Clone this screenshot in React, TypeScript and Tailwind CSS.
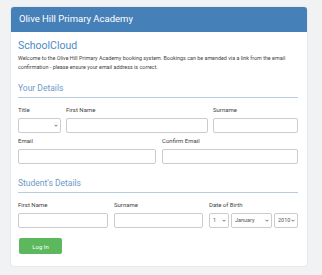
import React from "react";

const font = { fontFamily: "Roboto, 'Liberation Sans', sans-serif" };

function Label({ children }: { children: React.ReactNode }) {
  return <div className="text-[6px] leading-[8px] text-[#444] mb-[4px]">{children}</div>;
}

function Input({ className = "" }: { className?: string }) {
  return <div className={`h-[15px] bg-white border border-[#ccc] rounded-[2px] ${className}`} />;
}

function Select({ value, className = "" }: { value?: string; className?: string }) {
  return (
    <div
      className={`h-[15px] bg-white border border-[#ccc] rounded-[2px] flex items-center justify-between pl-[3px] pr-[2px] ${className}`}
    >
      <span className="text-[5.5px] text-[#555]">{value}</span>
      <svg width="4" height="3" viewBox="0 0 10 8" className="shrink-0">
        <path d="M1 2 L5 6 L9 2" fill="none" stroke="#444" strokeWidth="2" />
      </svg>
    </div>
  );
}

function SectionTitle({ children }: { children: React.ReactNode }) {
  return (
    <div className="border-b border-[#b8cde0] pb-[3px] mb-[8px]">
      <div className="text-[8.5px] leading-[11px] text-[#6b9bc8]">{children}</div>
    </div>
  );
}

export default function App() {
  return (
    <div className="w-[322px] h-[275px] bg-[#f1f2f3] pt-[7px] pl-[11px]" style={font}>
      <div className="w-[296px] h-[259px] bg-white rounded-[3px] shadow-[0_0_2px_rgba(0,0,0,0.12)] overflow-hidden">
        <div className="h-[25px] bg-[#4680b8] flex items-center px-[8px]">
          <span className="text-white text-[9.5px]">Olive Hill Primary Academy</span>
        </div>
        <div className="pl-[7px] pr-[9px] pt-[7px]">
          <div className="text-[10.5px] leading-[14px] text-[#4c8bc3] mb-[1px]">SchoolCloud</div>
          <p className="text-[5.4px] leading-[8.5px] text-[#444] mb-[12px]">
            Welcome to the Olive Hill Primary Academy booking system. Bookings can be amended via a link from the email
            confirmation - please ensure your email address is correct.
          </p>
          <SectionTitle>Your Details</SectionTitle>
          <div className="flex gap-[5px] mb-[4px]">
            <div className="w-[43px]">
              <Label>Title</Label>
              <Select />
            </div>
            <div className="w-[142px]">
              <Label>First Name</Label>
              <Input />
            </div>
            <div className="flex-1">
              <Label>Surname</Label>
              <Input />
            </div>
          </div>
          <div className="flex gap-[6px] mb-[14px]">
            <div className="w-[138px]">
              <Label>Email</Label>
              <Input />
            </div>
            <div className="flex-1">
              <Label>Confirm Email</Label>
              <Input />
            </div>
          </div>
          <SectionTitle>Student's Details</SectionTitle>
          <div className="flex gap-[6px] mb-[10px]">
            <div className="w-[90px]">
              <Label>First Name</Label>
              <Input />
            </div>
            <div className="w-[89px]">
              <Label>Surname</Label>
              <Input />
            </div>
            <div className="flex-1">
              <Label>Date of Birth</Label>
              <div className="flex gap-[2px]">
                <Select value="1" className="w-[20px]" />
                <Select value="January" className="w-[41px]" />
                <Select value="2010" className="flex-1" />
              </div>
            </div>
          </div>
          <div className="w-[43px] h-[16px] ml-[1px] bg-[#5cb85c] rounded-[2px] flex items-center justify-center">
            <span className="text-white text-[6px]">Log In</span>
          </div>
        </div>
      </div>
    </div>
  );
}
